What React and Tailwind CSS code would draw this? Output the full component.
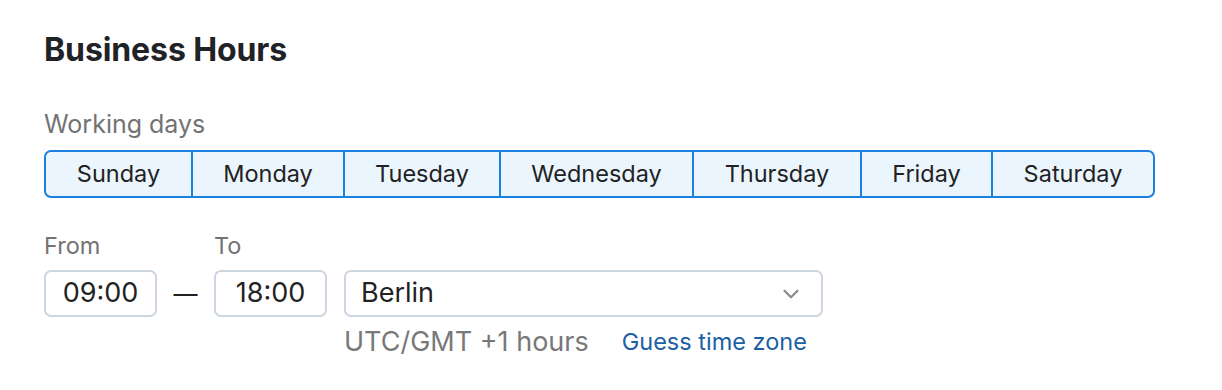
import { ChevronDown } from "lucide-react";

const days = [
  { name: "Sunday", w: "w-[145px]" },
  { name: "Monday", w: "w-[152px]" },
  { name: "Tuesday", w: "w-[156px]" },
  { name: "Wednesday", w: "w-[193px]" },
  { name: "Thursday", w: "w-[168px]" },
  { name: "Friday", w: "w-[131px]" },
  { name: "Saturday", w: "w-[162px]" },
];

export default function App() {
  return (
    <div className="min-h-[390px] w-[1222px] bg-white pl-[44px] pt-[30px] font-['Inter','Noto_Sans',sans-serif] text-[#222]">
      <h2 className="text-[32px] font-bold leading-[40px] tracking-[-0.1px] text-[#1f2226]">Business Hours</h2>

      <div className="mt-[39px] text-[25px] leading-[30px] text-[#737373]">Working days</div>

      <div className="mt-[11px] flex h-[48px] w-fit overflow-hidden rounded-[7px] border-2 border-[#1b80e2] bg-[#ebf5fe]">
        {days.map((d, i) => (
          <div
            key={d.name}
            className={`flex ${d.w} items-center justify-center text-[23.5px] text-[#222] ${i > 0 ? "border-l-2 border-[#1b80e2]" : ""}`}
          >
            {d.name}
          </div>
        ))}
      </div>

      <div className="mt-[34px] flex items-start">
        <div className="flex flex-col">
          <span className="text-[23.5px] leading-[28px] text-[#737373]">From</span>
          <div className="mt-[10px] flex h-[47px] w-[113px] items-center justify-center rounded-[7px] border-2 border-[#ccd6e0] text-[27px]">
            09:00
          </div>
        </div>
        <div className="mt-[38px] flex h-[47px] w-[57px] items-center justify-center text-[24px]">—</div>
        <div className="flex flex-col">
          <span className="text-[23.5px] leading-[28px] text-[#737373]">To</span>
          <div className="mt-[10px] flex h-[47px] w-[113px] items-center justify-center rounded-[7px] border-2 border-[#ccd6e0] text-[27px]">
            18:00
          </div>
        </div>
        <div className="ml-[17px] mt-[38px] flex flex-col">
          <div className="flex h-[47px] w-[479px] items-center justify-between rounded-[7px] border-2 border-[#ccd6e0] pl-[15px] pr-[17px] text-[27px]">
            <span>Berlin</span>
            <ChevronDown size={26} strokeWidth={2.1} className="text-[#8a8a8a]" />
          </div>
          <div className="mt-[9px] flex h-[32px] items-center gap-[33px]">
            <span className="text-[27px] leading-[32px] text-[#787878]">UTC/GMT +1 hours</span>
            <span className="text-[23.5px] leading-[32px] text-[#1d5fa3]">Guess time zone</span>
          </div>
        </div>
      </div>
    </div>
  );
}
